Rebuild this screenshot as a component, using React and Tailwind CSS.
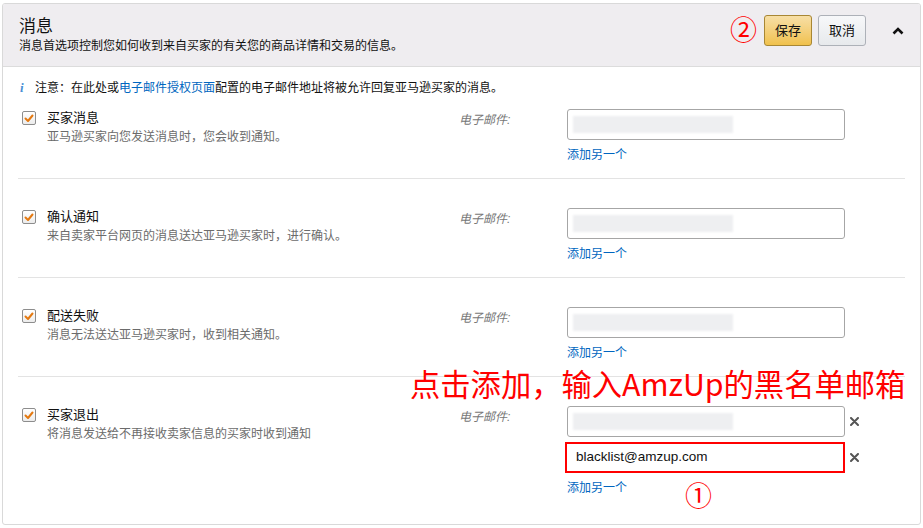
import React from 'react';

const rows = [
  { title: '买家消息', desc: '亚马逊买家向您发送消息时，您会收到通知。', first: true },
  { title: '确认通知', desc: '来自卖家平台网页的消息送达亚马逊买家时，进行确认。' },
  { title: '配送失败', desc: '消息无法送达亚马逊买家时，收到相关通知。' },
  { title: '买家退出', desc: '将消息发送给不再接收卖家信息的买家时收到通知', last: true },
];

const Check = () => (
  <div className="mt-[2px] w-[14px] h-[14px] shrink-0 rounded-[2px] border border-[#8d8d8d] bg-gradient-to-b from-white to-[#ececec] flex items-center justify-center">
    <svg width="12" height="12" viewBox="0 0 12 12">
      <path d="M2.5 6.5 L5 9 L9.5 3.5" fill="none" stroke="#e47911" strokeWidth="2" strokeLinecap="round" strokeLinejoin="round" />
    </svg>
  </div>
);

const Close = () => (
  <svg width="9" height="9" viewBox="0 0 9 9" className="ml-[5px]">
    <path d="M1 1 L8 8 M8 1 L1 8" stroke="#555" strokeWidth="2" strokeLinecap="round" />
  </svg>
);

// blurred field, the address is hidden in the picture
const Blurred = () => (
  <div className="h-[31px] w-[278px] rounded-[3px] border border-[#a6a6a6] flex items-center pl-[5px]">
    <div className="h-[17px] w-[160px] bg-[#eeeff1] blur-[1px]" />
  </div>
);

const AddLink = () => (
  <div className="mt-[7px] text-[12px] leading-[16px] text-[#0066c0]">添加另一个</div>
);

export default function App() {
  return (
    <div className="relative w-[923px] h-[528px] bg-white font-['Liberation_Sans','Noto_Sans_CJK_SC',sans-serif] text-[#111]">
      <div className="ml-[2px] mt-[3px] w-[919px] h-[522px] border border-[#d9d9d9] rounded-[3px] overflow-hidden">
        {/* header */}
        <div className="h-[63px] bg-[#efedf0] border-b border-[#dcdcdc] flex justify-between pl-[16px] pr-[16px]">
          <div className="pt-[12px]">
            <div className="text-[17px] leading-[22px] text-[#111]">消息</div>
            <div className="text-[12px] leading-[16px] text-[#111]">消息首选项控制您如何收到来自买家的有关您的商品详情和交易的信息。</div>
          </div>
          <div className="flex items-center h-[31px] mt-[11px]">
            <span className="text-[27px] leading-[30px] text-[#ff0000] mr-[7px]">②</span>
            <button className="w-[48px] h-[31px] rounded-[3px] border border-[#a88734] bg-gradient-to-b from-[#f7dfa5] to-[#f0c14b] text-[13px] text-[#111]">保存</button>
            <button className="ml-[6px] w-[48px] h-[31px] rounded-[3px] border border-[#adb1b8] bg-gradient-to-b from-[#f7f8fa] to-[#e7e9ec] text-[13px] text-[#111]">取消</button>
            <svg width="12" height="8" viewBox="0 0 12 8" className="ml-[26px]">
              <path d="M1.5 6.5 L6 2 L10.5 6.5" fill="none" stroke="#111" strokeWidth="2.6" />
            </svg>
          </div>
        </div>

        {/* note */}
        <div className="pt-[13px] pl-[17px] flex items-center text-[12px] leading-[16px]">
          <span className="w-[15px] font-['Liberation_Serif',serif] italic font-bold text-[13px] text-[#4a8fd4]">i</span>
          <span>注意：在此处或<span className="text-[#0066c0]">电子邮件授权页面</span>配置的电子邮件地址将被允许回复亚马逊买家的消息。</span>
        </div>

        {rows.map((r) => (
          <div
            key={r.title}
            className={
              'mx-[15px] pl-[4px] flex ' +
              (r.first ? 'h-[83px] pt-[13px] ' : 'h-[99px] pt-[29px] ') +
              (r.last ? '' : 'border-b border-[#e3e3e3]')
            }
          >
            <div className="w-[437px] flex">
              <Check />
              <div className="ml-[11px]">
                <div className="text-[13px] leading-[18px] text-[#111]">{r.title}</div>
                <div className="mt-[2px] text-[12px] leading-[16px] text-[#6b6b6b]">{r.desc}</div>
              </div>
            </div>
            <div className="w-[108px] pt-[3px] text-[12px] leading-[16px] italic text-[#777]">电子邮件:</div>
            <div>
              {r.last ? (
                <>
                  <div className="flex items-center">
                    <Blurred />
                    <Close />
                  </div>
                  <div className="flex items-center mt-[5px] -ml-[2px]">
                    <div className="h-[31px] w-[280px] border-2 border-[#ff0000] flex items-center pl-[9px] font-['Liberation_Sans',sans-serif] text-[13.5px] text-[#111]">
                      blacklist@amzup.com
                    </div>
                    <Close />
                  </div>
                  <div className="mt-[3px]">
                    <AddLink />
                  </div>
                </>
              ) : (
                <>
                  <Blurred />
                  <AddLink />
                </>
              )}
            </div>
          </div>
        ))}
      </div>

      {/* annotations */}
      <div className="absolute left-[410px] top-[363px] text-[30.3px] leading-[34px] text-[#ff0000] font-['Noto_Sans_CJK_SC',sans-serif] whitespace-nowrap">
        点击添加，输入AmzUp的黑名单邮箱
      </div>
      <div className="absolute left-[685px] top-[479px] text-[27px] leading-[30px] text-[#ff0000]">①</div>
    </div>
  );
}
